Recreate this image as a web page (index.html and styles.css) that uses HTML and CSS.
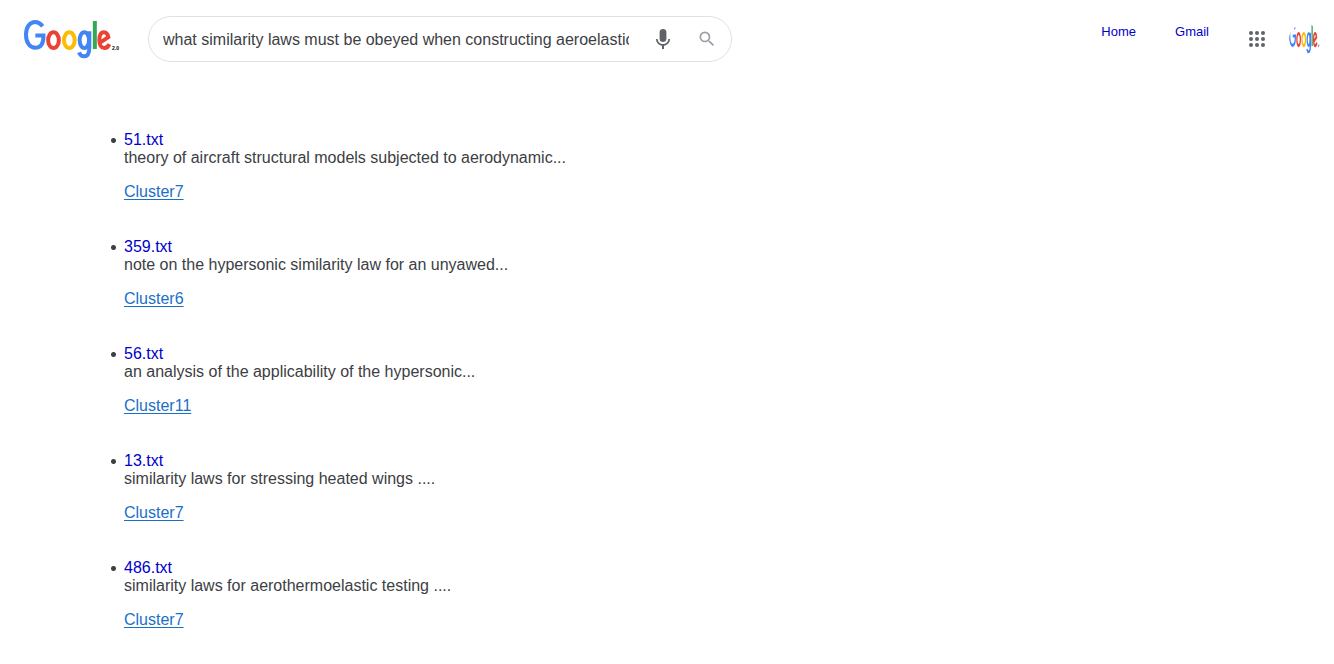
FILE: index.html
```html
<!DOCTYPE html>
<html lang="en">
<head>
<meta charset="utf-8">
<title>Google 2.0</title>
<link rel="stylesheet" href="styles.css">
</head>
<body>
<header class="topbar">
  <a class="logo" href="#" aria-label="Google 2.0">
    <svg viewBox="0 0 294 118" preserveAspectRatio="none">
      <g id="wordmark" fill="none" stroke-width="12">
        <g stroke="#4285f4">
          <path d="M56 19C49 10 42 6 34 6C16 6 6 23 6 45C6 68 17 84 34 84C51 84 59 71 58.500 47H34"/>
          <ellipse cx="181" cy="61" rx="14" ry="24"/>
          <path d="M196 34V83C196 103 190 110 180 110C173 110 168 106 165 98"/>
        </g>
        <ellipse stroke="#ea4335" cx="88.500" cy="61" rx="16" ry="24"/>
        <ellipse stroke="#fbbc05" cx="136" cy="61" rx="16" ry="24"/>
        <path stroke="#34a853" d="M212.500 3V88"/>
        <path stroke="#ea4335" d="M226 70L253 52C251 42 246 37 240 37C231 37 226 46 226 61C226 76 232 85 241 85C248 85 253 80 256 73"/>
      </g>
      <text class="version" x="264" y="91">2.0</text>
    </svg>
  </a>
  <form class="search">
    <input class="query" type="text" aria-label="Search" value="what similarity laws must be obeyed when constructing aeroelastic models of heated high speed aircraft">
    <button class="tool" type="button" aria-label="Search by voice">
      <svg class="mic-icon" viewBox="0 0 24 24" fill="#5f6368"><path d="M12 15c1.900 0 3.400-1.300 3.400-3V5c0-1.700-1.500-3-3.400-3S8.600 3.300 8.600 5v7c0 1.700 1.500 3 3.400 3z"/><path d="M17.300 12c0 3-2.500 5.100-5.300 5.100S6.700 15 6.700 12H5c0 3.400 2.700 6.200 6 6.700V22h2v-3.300c3.300-.5 6-3.300 6-6.700z"/></svg>
    </button>
    <button class="tool" type="submit" aria-label="Search">
      <svg class="find-icon" viewBox="0 0 24 24" fill="#9aa0a6"><path d="M15.500 14h-.79l-.28-.27A6.470 6.470 0 0 0 16 9.500 6.500 6.500 0 1 0 9.500 16c1.610 0 3.090-.59 4.230-1.570l.27.28v.79l5 4.990L20.490 19l-4.990-5zm-6 0C7.010 14 5 11.990 5 9.500S7.010 5 9.500 5 14 7.010 14 9.500 11.990 14 9.500 14z"/></svg>
    </button>
  </form>
  <nav class="links">
    <a href="#">Home</a>
    <a href="#">Gmail</a>
  </nav>
  <button class="apps" type="button" aria-label="Apps">
    <svg viewBox="0 0 16 16" fill="#5f6368"><circle cx="2" cy="2" r="2"/><circle cx="8" cy="2" r="2"/><circle cx="14" cy="2" r="2"/><circle cx="2" cy="8" r="2"/><circle cx="8" cy="8" r="2"/><circle cx="14" cy="8" r="2"/><circle cx="2" cy="14" r="2"/><circle cx="8" cy="14" r="2"/><circle cx="14" cy="14" r="2"/></svg>
  </button>
  <button class="avatar" type="button" aria-label="Account">
    <svg viewBox="0 0 294 118" preserveAspectRatio="none"><use href="#wordmark"/><path d="M266 82h8v9h-8zM280 82h8l-4 12h-4z" fill="#777"/></svg>
  </button>
</header>

<main>
  <ul class="results">
    <li>
      <a class="title" href="#">51.txt</a>
      <p class="snippet">theory of aircraft structural models subjected to aerodynamic...</p>
      <a class="cluster" href="#">Cluster7</a>
    </li>
    <li>
      <a class="title" href="#">359.txt</a>
      <p class="snippet">note on the hypersonic similarity law for an unyawed...</p>
      <a class="cluster" href="#">Cluster6</a>
    </li>
    <li>
      <a class="title" href="#">56.txt</a>
      <p class="snippet">an analysis of the applicability of the hypersonic...</p>
      <a class="cluster" href="#">Cluster11</a>
    </li>
    <li>
      <a class="title" href="#">13.txt</a>
      <p class="snippet">similarity laws for stressing heated wings ....</p>
      <a class="cluster" href="#">Cluster7</a>
    </li>
    <li>
      <a class="title" href="#">486.txt</a>
      <p class="snippet">similarity laws for aerothermoelastic testing ....</p>
      <a class="cluster" href="#">Cluster7</a>
    </li>
  </ul>
</main>
</body>
</html>
```

FILE: styles.css
```css
* {
  box-sizing: border-box;
}

body {
  margin: 0;
  background: #fff;
  color: #3c4043;
  font: 16px/18px "Liberation Sans", Arial, sans-serif;
}

svg {
  display: block;
}

button {
  padding: 0;
  border: 0;
  background: none;
  cursor: pointer;
}

.topbar {
  display: flex;
  align-items: center;
  padding: 16px 13px 0 24px;
}

.logo svg {
  width: 98px;
  height: 39px;
}

.version {
  font: bold 15px "Liberation Sans", Arial, sans-serif;
  fill: #000;
}

.search {
  display: flex;
  align-items: center;
  gap: 22px;
  flex: 0 1 584px;
  height: 46px;
  margin-left: 26px;
  padding: 0 14px;
  border: 1px solid #dfe1e5;
  border-radius: 24px;
}

.query {
  flex: 1;
  min-width: 0;
  height: 34px;
  padding: 2px 0 0;
  border: 0;
  outline: 0;
  background: none;
  color: inherit;
  font: inherit;
}

.tool {
  flex: none;
}

.mic-icon {
  width: 24px;
  height: 24px;
}

.find-icon {
  width: 20px;
  height: 20px;
}

.links {
  display: flex;
  gap: 39px;
  align-self: flex-start;
  margin-left: auto;
  padding-top: 7px;
  font-size: 13px;
}

.links a,
.title {
  color: #0000cc;
  text-decoration: none;
}

.apps {
  margin-left: 40px;
}

.apps svg {
  width: 16px;
  height: 16px;
}

.avatar {
  margin-left: 24px;
  border-radius: 50%;
  overflow: hidden;
}

.avatar svg {
  width: 32px;
  height: 30px;
}

.results {
  margin: 69px 0 0;
  padding: 0 24px 0 110px;
  list-style: none;
}

.results li {
  margin-bottom: 37px;
  padding-left: 14px;
  background: radial-gradient(circle, #3c4043 2px, transparent 3px) 0 6px / 7px 7px no-repeat;
}

.snippet {
  margin: 0 0 16px;
}

.cluster {
  color: #1a6fc9;
  text-underline-offset: 2px;
}
```
